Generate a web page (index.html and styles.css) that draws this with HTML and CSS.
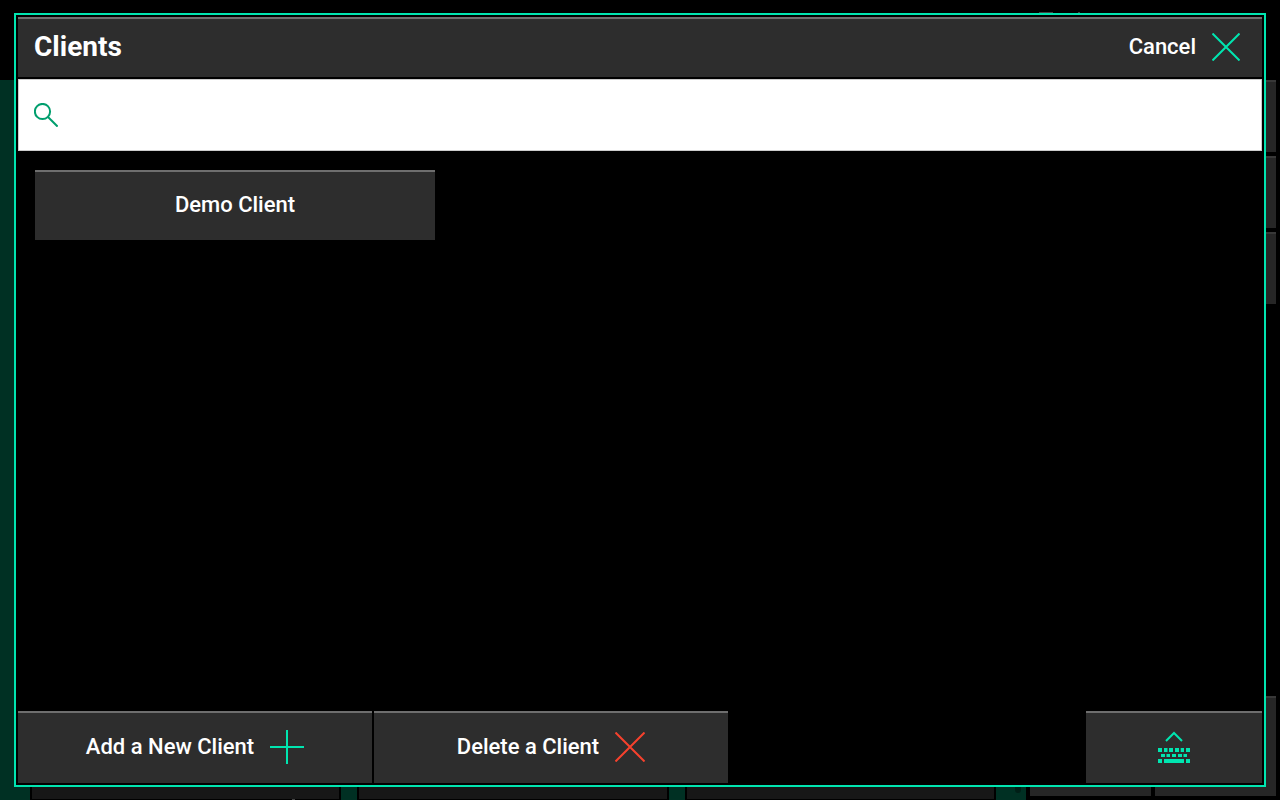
FILE: index.html
```html
<!DOCTYPE html>
<html lang="en">
<head>
<meta charset="utf-8">
<meta name="viewport" content="width=device-width, initial-scale=1">
<title>Clients</title>
<link rel="stylesheet" href="styles.css">
</head>
<body>
<div class="backdrop" aria-hidden="true">
  <div class="workspace">
    <div class="card"></div>
    <div class="card"></div>
    <div class="card"></div>
    <span class="knob"></span>
  </div>
  <div class="side">
    <div class="tile side-wide"></div>
    <div class="tile side-wide"></div>
    <div class="tile side-wide"></div>
    <div class="tile side-low"></div>
    <div class="tile side-low"></div>
  </div>
  <span class="mark mark-wide"></span>
  <span class="mark mark-dot"></span>
  <span class="mark mark-bottom"></span>
</div>
<main class="dialog" role="dialog" aria-labelledby="title">
  <header class="header">
    <h1 class="title" id="title">Clients</h1>
    <button class="cancel" type="button">Cancel
      <svg class="icon mint" width="28" height="28" viewBox="0 0 28 28"><path d="M0.5 0.5 27.5 27.5M27.5 0.5 0.5 27.5"/></svg>
    </button>
  </header>
  <label class="search">
    <svg class="icon green" width="24" height="24" viewBox="0 0 24 24"><circle cx="8.5" cy="8.5" r="7.6"/><path d="M14 14 23.6 23.6"/></svg>
    <input class="search-input" type="text" aria-label="Search clients">
  </label>
  <section class="list">
    <button class="button client" type="button">Demo Client</button>
  </section>
  <footer class="footer">
    <button class="button action" type="button">Add a New Client
      <svg class="icon mint" width="34" height="34" viewBox="0 0 34 34"><path d="M0 17H34M17 0V34"/></svg>
    </button>
    <button class="button action" type="button">Delete a Client
      <svg class="icon red" width="30" height="30" viewBox="0 0 30 30"><path d="M0.5 0.5 29.5 29.5M29.5 0.5 0.5 29.5"/></svg>
    </button>
    <button class="button keyboard" type="button" aria-label="Show keyboard">
      <svg class="icon mint" width="32" height="32" viewBox="0 0 32 32">
        <path d="M8 10 16 2 24 10"/>
        <path class="keys" d="M0 17h4v4H0zM6 17h3.5v4H6zM11 17h4v4h-4zM17 17h4v4h-4zM22.7 17h3.3v4h-3.300zM28 17h4v4h-4zM3 23h4v3H3zM8.500 23h3.500v3H8.500zM14 23h4v3h-4zM20 23h4v3h-4zM25.500 23h3.500v3h-3.500zM0 28h4v4H0zM6 28h20v4H6zM28 28h4v4h-4z"/>
      </svg>
    </button>
  </footer>
</main>
</body>
</html>
```
FILE: styles.css
```css
* { box-sizing: border-box; }

body {
  margin: 0;
  min-height: 100vh;
  display: flex;
  padding: 13px 14px;
  background: #000;
  color: #fff;
  font: 500 22px/26px Roboto, sans-serif;
}

button {
  border: 0;
  padding: 0;
  background: none;
  color: inherit;
  font: inherit;
  cursor: pointer;
}

/* Dimmed screen behind the dialog */
.backdrop {
  position: absolute;
  inset: 0;
  display: flex;
  gap: 4px;
  padding: 80px 4px 0 0;
  overflow: hidden;
}

.workspace {
  position: relative;
  flex: 1;
  display: flex;
  gap: 16px;
  padding: 0 30px;
  background: #003023;
}

.card {
  flex: 1;
  background: #171717;
  border: 2px solid #000;
  border-bottom-width: 1px;
}

.knob {
  position: absolute;
  right: 5px;
  bottom: 7px;
  width: 6px;
  height: 12px;
  border-radius: 3px;
  background: #001f17;
}

.side {
  display: grid;
  grid-template-columns: 121px 121px;
  grid-template-rows: 72px 72px 72px 1fr;
  gap: 4px;
  padding-bottom: 4px;
}

.tile {
  background: #262626;
  box-shadow: inset 0 2px #383838;
}

.side-wide { grid-column: span 2; }

.side-low {
  height: 100px;
  align-self: end;
}

.mark {
  position: absolute;
  height: 1px;
  background: #444;
}

.mark-wide { top: 12px; right: 227px; width: 14px; }
.mark-dot { top: 12px; right: 200px; width: 2px; }
.mark-bottom { bottom: 0; left: 292px; width: 3px; }

.dialog {
  position: relative;
  flex: 1;
  display: flex;
  flex-direction: column;
  gap: 2px;
  padding: 2px;
  border: 2px solid #00e5b0;
  background: #000;
}

.header {
  display: flex;
  align-items: center;
  justify-content: space-between;
  height: 60px;
  padding: 0 22px 0 16px;
  background: #2d2d2d;
  box-shadow: inset 0 2px #6e6e6e;
}

.title {
  margin: 0;
  font-size: 28px;
  line-height: 32px;
  font-weight: 700;
}

.cancel {
  display: flex;
  align-items: center;
  gap: 16px;
}

.icon {
  flex: none;
  fill: none;
  stroke: currentColor;
  stroke-width: 2px;
}

.mint { color: #00e5b0; }
.green { color: #009e6d; }
.red { color: #f6412d; }

.keys {
  fill: currentColor;
  stroke: none;
}

.search {
  display: flex;
  align-items: center;
  gap: 16px;
  height: 72px;
  padding: 0 15px;
  background: #fff;
  border: 1px solid #ccc;
}

.search-input {
  flex: 1;
  min-width: 0;
  height: 48px;
  border: 0;
  padding: 0;
  outline: 0;
  background: none;
  color: #000;
  font: inherit;
}

.list {
  flex: 1;
  padding: 17px;
}

.button {
  display: flex;
  align-items: center;
  justify-content: center;
  gap: 16px;
  background: #2d2d2d;
  box-shadow: inset 0 2px #6e6e6e;
}

.client {
  width: 400px;
  max-width: 100%;
  height: 70px;
}

.footer {
  display: grid;
  grid-template-columns: repeat(7, 1fr);
  grid-auto-rows: 72px;
  gap: 2px;
}

.action { grid-column: span 2; }
.keyboard { grid-column: 7; }
```
